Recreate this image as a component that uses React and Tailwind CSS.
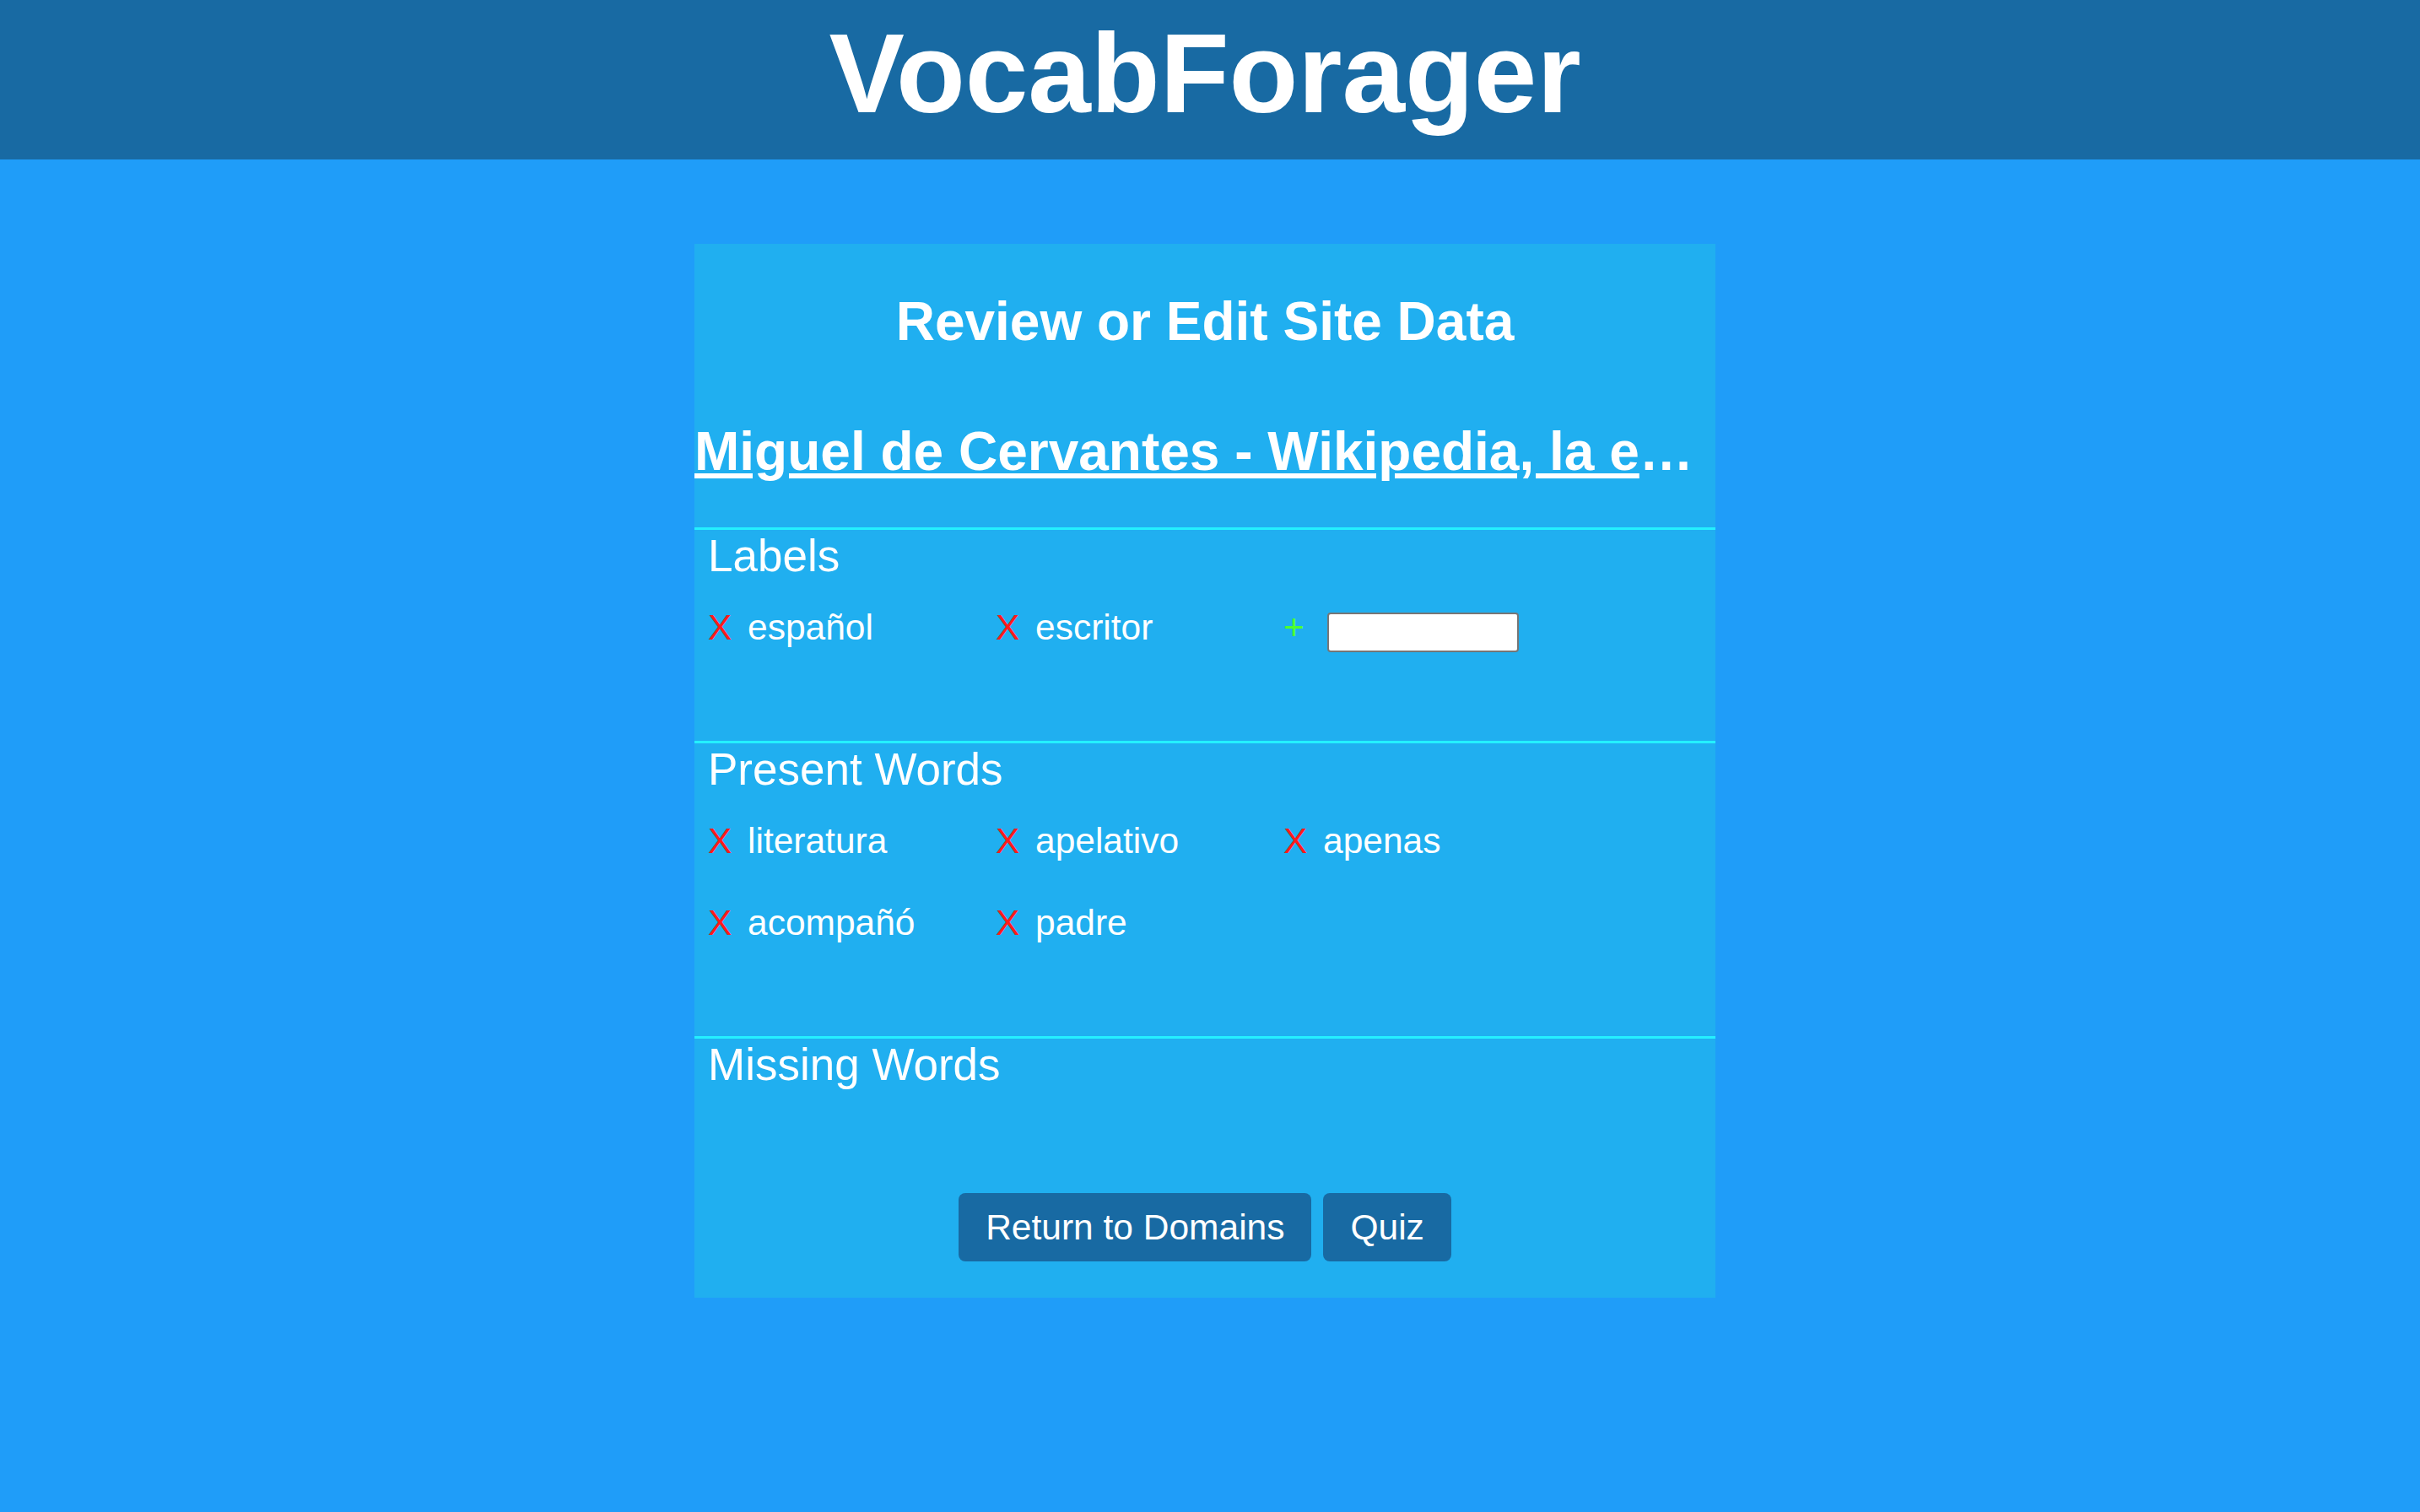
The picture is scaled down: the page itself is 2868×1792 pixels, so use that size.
import React from "react";

const labels = ["español", "escritor"];
const presentWords = ["literatura", "apelativo", "apenas", "acompañó", "padre"];

const WordItem = ({ word }) => (
  <div className="flex items-start w-[341px] h-[49px] mb-[48px]">
    <button type="button" className="w-[47px] text-left text-[#ff1a1a] leading-[49px]">
      X
    </button>
    <span className="leading-[49px]">{word}</span>
  </div>
);

const Section = ({ title, children }) => (
  <section className="border-t-[3px] border-[#24f0ff]">
    <h3 className="pl-[16px] text-[53px] leading-[61px]">{title}</h3>
    {children}
  </section>
);

const App = () => {
  return (
    <div className="min-h-screen bg-[#1f9df9] font-['Liberation_Sans',Arial,sans-serif] text-white">
      {/* Header */}
      <header className="h-[189px] bg-[#186aa3] flex justify-center pr-[12px]">
        <h1 className="pt-[11px] text-[134px] font-bold leading-[152px]">VocabForager</h1>
      </header>

      {/* Main Content */}
      <main className="flex justify-center pt-[100px] pr-[12px]">
        <div className="w-[1210px] bg-[#20aff0] pt-[55px] pb-[43px]">
          <h2 className="text-center text-[64px] font-bold leading-[74px]">Review or Edit Site Data</h2>
          <h2 className="mt-[80px] text-[64px] font-bold leading-[74px] whitespace-nowrap overflow-hidden">
            <a href="#" className="underline">
              Miguel de Cervantes - Wikipedia, la e
            </a>
            <span>…</span>
          </h2>

          <div className="mt-[53px] text-[42.5px]">
            <Section title="Labels">
              <div className="flex flex-wrap pl-[16px] pt-[30px] pb-[62px]">
                {labels.map((w) => (
                  <WordItem key={w} word={w} />
                ))}
                <div className="flex items-start w-[341px] h-[49px] mb-[48px]">
                  <button type="button" className="w-[47px] text-left text-[#4dff2e] leading-[49px]">
                    +
                  </button>
                  <input
                    type="text"
                    className="ml-[5px] mt-[7px] w-[227px] h-[47px] bg-white border-2 border-[#767676] rounded-[4px] text-black text-[24px] px-2"
                  />
                </div>
              </div>
            </Section>

            <Section title="Present Words">
              <div className="flex flex-wrap pl-[16px] pt-[30px] pb-[62px]">
                {presentWords.map((w) => (
                  <WordItem key={w} word={w} />
                ))}
              </div>
            </Section>

            <Section title="Missing Words">
              <div className="flex justify-center gap-[14px] mt-[122px]">
                <button type="button" className="h-[81px] px-[32px] bg-[#186aa3] rounded-[8px]">
                  Return to Domains
                </button>
                <button type="button" className="h-[81px] px-[32px] bg-[#186aa3] rounded-[8px]">
                  Quiz
                </button>
              </div>
            </Section>
          </div>
        </div>
      </main>
    </div>
  );
};

export default App;
